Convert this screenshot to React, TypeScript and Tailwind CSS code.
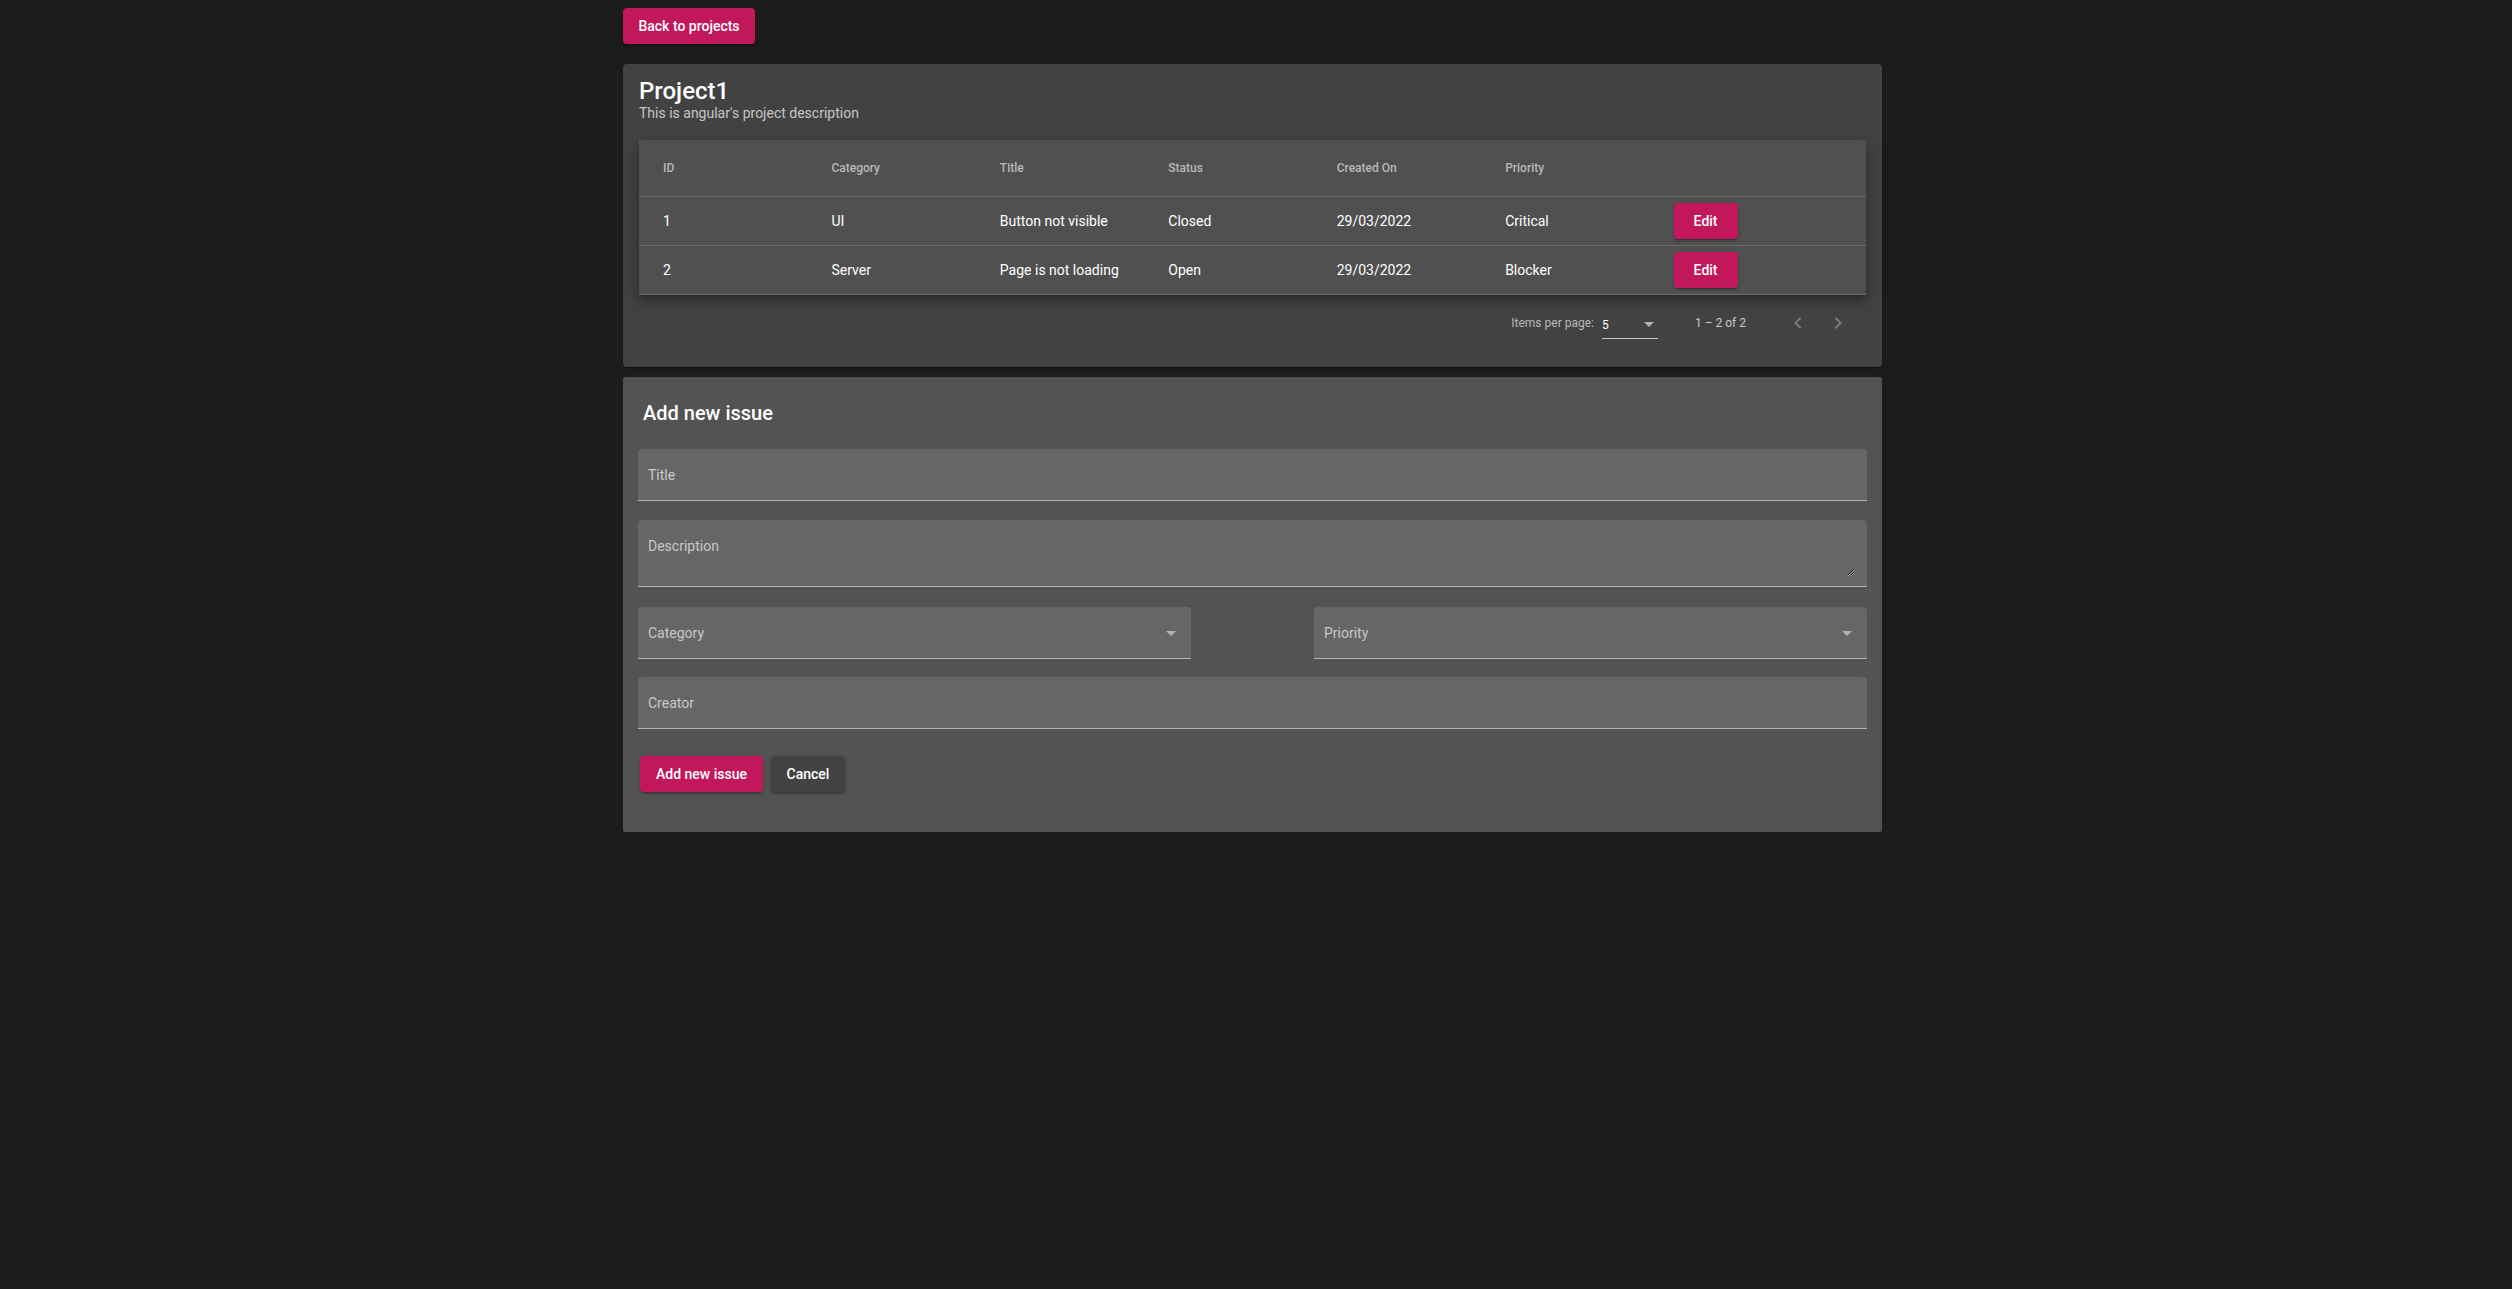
import React from "react";

type Issue = {
  id: number;
  category: string;
  title: string;
  status: string;
  createdOn: string;
  priority: string;
};

const issues: Issue[] = [
  { id: 1, category: "UI", title: "Button not visible", status: "Closed", createdOn: "29/03/2022", priority: "Critical" },
  { id: 2, category: "Server", title: "Page is not loading", status: "Open", createdOn: "29/03/2022", priority: "Blocker" },
];

const raised =
  "shadow-[0_3px_1px_-2px_rgba(0,0,0,0.2),0_2px_2px_0_rgba(0,0,0,0.14),0_1px_5px_0_rgba(0,0,0,0.12)]";

function SelectArrow() {
  return (
    <svg className="w-[10px] h-[5px]" viewBox="0 0 10 5">
      <path d="M0 0 L10 0 L5 5 Z" fill="#b3b3b3" />
    </svg>
  );
}

function Field({ label, height = "h-[52px]", select, textarea, className = "" }: {
  label: string;
  height?: string;
  select?: boolean;
  textarea?: boolean;
  className?: string;
}) {
  return (
    <div className={`relative ${height} bg-[#666666] rounded-t-[4px] border-b border-[#b5b5b5] ${className}`}>
      <div className="flex items-start justify-between pl-[10px] pr-[15px] pt-4">
        <span className="text-[14px] leading-5 text-[#c8c8c8]">{label}</span>
        {select && (
          <span className="mt-[8px]">
            <SelectArrow />
          </span>
        )}
      </div>
      {textarea && (
        <svg className="absolute right-[12px] bottom-[10px] w-[8px] h-[8px]" viewBox="0 0 8 8">
          <path d="M7 1 L1 7 M7 4 L4 7" stroke="#1f1f1f" strokeWidth={1} />
          <path d="M7.6 1.6 L1.6 7.6 M7.6 4.6 L4.6 7.6" stroke="#bdbdbd" strokeWidth={0.8} />
        </svg>
      )}
    </div>
  );
}

export default function App() {
  return (
    <div className="min-h-screen bg-[#1c1c1c] font-['Roboto','Liberation_Sans',sans-serif] text-white">
      <div className="ml-[623px] w-[1259px] pt-2">
        <button className={`h-9 w-[132px] rounded-[4px] bg-[#c2185b] text-[14px] font-medium text-white ${raised}`}>
          Back to projects
        </button>

        {/* project card */}
        <div className="mt-5 rounded-[4px] bg-[#424242] px-4 pt-[15px] pb-4 shadow-[0_2px_1px_-1px_rgba(0,0,0,0.2),0_1px_1px_0_rgba(0,0,0,0.14),0_1px_3px_0_rgba(0,0,0,0.12)]">
          <h1 className="text-[24px] leading-[24px] font-medium text-white">Project1</h1>
          <p className="text-[14px] leading-5 text-[#c6c6c6]">This is angular's project description</p>

          <div className="mt-[17px] bg-[#505050] shadow-[0_5px_5px_-3px_rgba(0,0,0,0.2),0_8px_10px_1px_rgba(0,0,0,0.14),0_3px_14px_2px_rgba(0,0,0,0.12)]">
            <div className="grid grid-cols-7 h-[57px] items-center px-6 border-b border-[#6a6a6a] text-[12px] font-medium text-[#b8b8b8]">
              <div>ID</div>
              <div>Category</div>
              <div>Title</div>
              <div>Status</div>
              <div>Created On</div>
              <div>Priority</div>
              <div />
            </div>
            {issues.map((issue) => (
              <div key={issue.id} className="grid grid-cols-7 h-[49px] items-center px-6 border-b border-[#6a6a6a] text-[14px] text-white">
                <div>{issue.id}</div>
                <div>{issue.category}</div>
                <div>{issue.title}</div>
                <div>{issue.status}</div>
                <div>{issue.createdOn}</div>
                <div>{issue.priority}</div>
                <div>
                  <button className={`h-9 w-16 rounded-[4px] bg-[#c2185b] text-[14px] font-medium text-white ${raised}`}>
                    Edit
                  </button>
                </div>
              </div>
            ))}
          </div>

          {/* paginator */}
          <div className="flex h-14 items-center justify-end pr-2">
            <span className="text-[12px] text-[#b8b8b8]">Items per page:</span>
            <div className="ml-2 flex w-14 items-center justify-between border-b border-[#c8c8c8] pb-[4px] mt-[8px]">
              <span className="text-[12px] text-white">5</span>
              <span className="mr-[4px]">
                <SelectArrow />
              </span>
            </div>
            <span className="ml-[37px] text-[12px] text-[#c8c8c8]">1 – 2 of 2</span>
            <div className="ml-8 flex">
              <button className="flex h-10 w-10 items-center justify-center">
                <svg className="h-6 w-6" viewBox="0 0 24 24">
                  <path d="M15.41 7.41L14 6l-6 6 6 6 1.41-1.41L10.83 12z" fill="#7a7a7a" />
                </svg>
              </button>
              <button className="flex h-10 w-10 items-center justify-center">
                <svg className="h-6 w-6" viewBox="0 0 24 24">
                  <path d="M10 6L8.59 7.41 13.17 12l-4.58 4.59L10 18l6-6z" fill="#7a7a7a" />
                </svg>
              </button>
            </div>
          </div>
        </div>

        {/* add issue card */}
        <div className="mt-[10px] rounded-[2px] bg-[#535353] px-[15px] pt-[22px] pb-[40px]">
          <h2 className="ml-[5px] text-[20px] leading-7 font-medium text-white">Add new issue</h2>
          <Field label="Title" className="mt-[22px]" />
          <Field label="Description" height="h-[67px]" textarea className="mt-[19px]" />
          <div className="mt-5 flex justify-between">
            <Field label="Category" select className="w-[45%]" />
            <Field label="Priority" select className="w-[45%]" />
          </div>
          <Field label="Creator" className="mt-[18px]" />
          <div className="mt-[27px] ml-[2px] flex gap-2">
            <button className={`h-9 w-[123px] rounded-[4px] bg-[#c2185b] text-[14px] font-medium text-white ${raised}`}>
              Add new issue
            </button>
            <button className={`h-9 w-[74px] rounded-[4px] bg-[#424242] text-[14px] font-medium text-white ${raised}`}>
              Cancel
            </button>
          </div>
        </div>
      </div>
    </div>
  );
}
